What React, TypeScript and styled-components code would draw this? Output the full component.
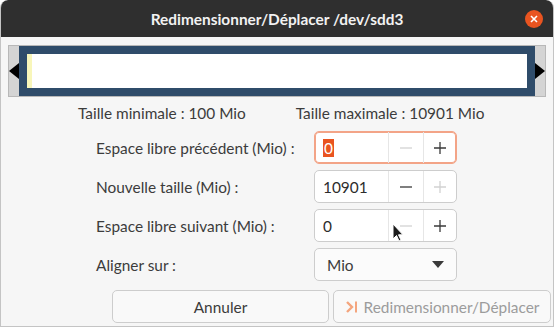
import React from 'react';
import styled, { createGlobalStyle } from 'styled-components';

const GlobalStyle = createGlobalStyle`
  html, body {
    margin: 0;
    padding: 0;
    background: #ffffff;
  }
  * {
    box-sizing: border-box;
  }
`;

const Window = styled.div`
  position: relative;
  width: 554px;
  height: 327px;
  background: #f6f6f6;
  border: 1px solid #c4c4c4;
  border-top: none;
  border-radius: 8px 8px 0 0;
  overflow: hidden;
  font-family: Lato, 'Noto Sans', sans-serif;
  font-size: 15.4px;
  color: #3c3c3c;
`;

const TitleBar = styled.div`
  position: relative;
  height: 37px;
  margin: 0 -1px;
  background: #2f2f2f;
  border-radius: 8px 8px 0 0;
  display: flex;
  align-items: center;
  justify-content: center;
  color: #f2f2f2;
  font-weight: 700;
  font-size: 15.4px;
`;

const CloseButton = styled.div`
  position: absolute;
  right: 11px;
  top: 10px;
  width: 18px;
  height: 18px;
  border-radius: 50%;
  background: #e95420;
  display: flex;
  align-items: center;
  justify-content: center;
`;

const Body = styled.div`
  padding: 8px 7px 0 7px;
`;

const PartitionBar = styled.div`
  height: 52px;
  background: #d4d4d4;
  border: 1px solid #b8b8b8;
  display: flex;
  align-items: stretch;
`;

const ArrowCell = styled.div`
  width: 10px;
  display: flex;
  align-items: center;
  justify-content: center;
`;

const PartitionFrame = styled.div`
  flex: 1;
  border: 8px solid #2f4c6a;
  background: #ffffff;
  display: flex;
`;

const UsedStripe = styled.div`
  width: 5px;
  background: #f8f6ba;
`;

const SizeInfo = styled.div`
  display: flex;
  padding: 4px 0 0 70px;
  height: 28px;
  align-items: center;
  gap: 50px;
`;

const Form = styled.div`
  display: grid;
  grid-template-columns: 218px 143px;
  grid-auto-rows: 33px;
  row-gap: 6px;
  padding: 6px 0 0 88px;
  align-items: center;
`;

const Label = styled.div`
  white-space: nowrap;
`;

const SpinBox = styled.div<{ $focused?: boolean }>`
  height: 33px;
  display: grid;
  grid-template-columns: 73px 35px 1fr;
  background: #ffffff;
  border: 1px solid ${p => (p.$focused ? '#f3a487' : '#cdcdcd')};
  box-shadow: ${p => (p.$focused ? 'inset 0 0 0 1px #f3a487' : 'none')};
  border-radius: 5px;
`;

const SpinEntry = styled.div`
  display: flex;
  align-items: center;
  padding-left: 8px;
  color: #2c2c2c;
`;

const Selected = styled.span`
  background: #e95420;
  color: #ffffff;
  padding: 0 1px;
`;

const SpinButton = styled.div`
  border-left: 1px solid #e6e6e6;
  display: flex;
  align-items: center;
  justify-content: center;
`;

const Combo = styled.div`
  height: 33px;
  background: #fbfbfb;
  border: 1px solid #cdcdcd;
  border-radius: 5px;
  display: flex;
  align-items: center;
  justify-content: space-between;
  padding: 0 12px 0 12px;
`;

const ButtonRow = styled.div`
  display: grid;
  grid-template-columns: 217px 218px;
  gap: 4px;
  padding: 9px 0 0 104px;
`;

const Button = styled.div<{ $disabled?: boolean }>`
  height: 33px;
  background: #f9f9f9;
  border: 1px solid #cdcdcd;
  border-radius: 5px;
  display: flex;
  align-items: center;
  justify-content: center;
  gap: 5px;
  color: ${p => (p.$disabled ? '#9c9c9c' : '#3c3c3c')};
`;

const Cursor = styled.svg`
  position: absolute;
  left: 391px;
  top: 223px;
`;

const Minus = ({ color }: { color: string }) => (
  <svg width="14" height="14" viewBox="0 0 14 14">
    <path d="M1 7h12" stroke={color} strokeWidth="1.3" />
  </svg>
);

const Plus = ({ color }: { color: string }) => (
  <svg width="14" height="14" viewBox="0 0 14 14">
    <path d="M1 7h12M7 1v12" stroke={color} strokeWidth="1.3" />
  </svg>
);

const ON = '#3a3a3a';
const OFF = '#d2d2d2';

const App: React.FC = () => {
  return (
    <>
      <GlobalStyle />
      <Window>
        <TitleBar>
          Redimensionner/Déplacer /dev/sdd3
          <CloseButton>
            <svg width="8" height="8" viewBox="0 0 8 8">
              <path d="M1 1l6 6M7 1l-6 6" stroke="#ffffff" strokeWidth="1.6" />
            </svg>
          </CloseButton>
        </TitleBar>
        <Body>
          <PartitionBar>
            <ArrowCell>
              <svg width="10" height="16" viewBox="0 0 10 16">
                <path d="M10 0L0 8l10 8z" fill="#000" />
              </svg>
            </ArrowCell>
            <PartitionFrame>
              <UsedStripe />
            </PartitionFrame>
            <ArrowCell>
              <svg width="10" height="16" viewBox="0 0 10 16">
                <path d="M0 0l10 8-10 8z" fill="#000" />
              </svg>
            </ArrowCell>
          </PartitionBar>
          <SizeInfo>
            <span>Taille minimale : 100 Mio</span>
            <span>Taille maximale : 10901 Mio</span>
          </SizeInfo>
          <Form>
            <Label>Espace libre précédent (Mio) :</Label>
            <SpinBox $focused>
              <SpinEntry><Selected>0</Selected></SpinEntry>
              <SpinButton><Minus color={OFF} /></SpinButton>
              <SpinButton><Plus color={ON} /></SpinButton>
            </SpinBox>
            <Label>Nouvelle taille (Mio) :</Label>
            <SpinBox>
              <SpinEntry>10901</SpinEntry>
              <SpinButton><Minus color={ON} /></SpinButton>
              <SpinButton><Plus color={OFF} /></SpinButton>
            </SpinBox>
            <Label>Espace libre suivant (Mio) :</Label>
            <SpinBox>
              <SpinEntry>0</SpinEntry>
              <SpinButton><Minus color={OFF} /></SpinButton>
              <SpinButton><Plus color={ON} /></SpinButton>
            </SpinBox>
            <Label>Aligner sur :</Label>
            <Combo>
              <span>Mio</span>
              <svg width="12" height="7" viewBox="0 0 12 7">
                <path d="M0 0h12L6 7z" fill="#3a3a3a" />
              </svg>
            </Combo>
          </Form>
          <ButtonRow>
            <Button>Annuler</Button>
            <Button $disabled>
              <svg width="14" height="14" viewBox="0 0 14 14">
                <path d="M2 2l5 5-5 5" stroke="#f4a57e" strokeWidth="2.4" fill="none" />
                <path d="M11 1.5v11" stroke="#f4a57e" strokeWidth="2" />
              </svg>
              Redimensionner/Déplacer
            </Button>
          </ButtonRow>
        </Body>
        <Cursor width="13" height="19" viewBox="0 0 13 19">
          <path d="M1 1v15l3.5-3.5 2.5 5.5 2-1-2.5-5.2H11z" fill="#1a1a1a" stroke="#ffffff" strokeWidth="1" />
        </Cursor>
      </Window>
    </>
  );
};

export default App;
